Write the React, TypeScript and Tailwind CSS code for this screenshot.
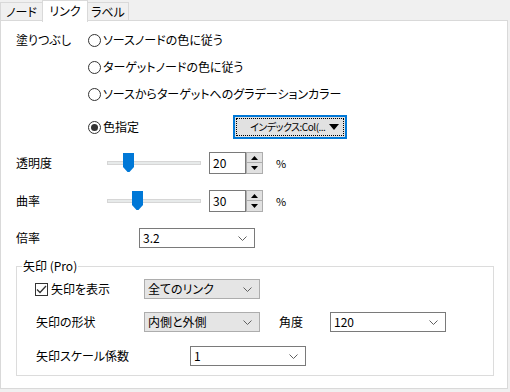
import React from 'react'

const font = "font-['Noto_Sans_CJK_JP',sans-serif] [font-feature-settings:'palt'] text-[12px] leading-[16px] text-black"

function Chevron() {
  return (
    <svg width="9" height="5" viewBox="0 0 9 5" className="shrink-0">
      <path d="M0.5 0.5 L4.5 4.5 L8.5 0.5" fill="none" stroke="#606060" strokeWidth="1" />
    </svg>
  )
}

function Combo({ value, gray = false }: { value: string; gray?: boolean }) {
  return (
    <div
      className={
        gray
          ? 'flex h-[20px] w-[116px] items-center justify-between border border-[#adadad] bg-[#e5e5e5] pl-[3px] pr-[7px]'
          : 'flex h-[20px] w-[116px] items-center justify-between border border-[#7a7a7a] bg-white pl-[3px] pr-[7px]'
      }
    >
      <span>{value}</span>
      <Chevron />
    </div>
  )
}

function Radio({ checked = false, label }: { checked?: boolean; label: string }) {
  return (
    <div className="flex items-center gap-[2px]">
      <div className="flex h-[13px] w-[13px] items-center justify-center rounded-full border border-[#333] bg-white">
        {checked && <div className="h-[7px] w-[7px] rounded-full bg-[#333]" />}
      </div>
      <span>{label}</span>
    </div>
  )
}

function Spin({ value }: { value: string }) {
  return (
    <div className="flex h-[22px]">
      <div className="flex w-[37px] items-center border border-[#7a7a7a] bg-white pl-[3px]">{value}</div>
      <div className="flex w-[17px] flex-col">
        <div className="flex h-[11px] items-center justify-center border border-[#adadad] bg-[#e1e1e1]">
          <svg width="7" height="4" viewBox="0 0 7 4"><path d="M0 4 L3.5 0 L7 4 Z" fill="#000" /></svg>
        </div>
        <div className="flex h-[11px] items-center justify-center border border-t-0 border-[#adadad] bg-[#e1e1e1]">
          <svg width="7" height="4" viewBox="0 0 7 4"><path d="M0 0 L3.5 4 L7 0 Z" fill="#000" /></svg>
        </div>
      </div>
    </div>
  )
}

function SliderRow({ label, value, thumb }: { label: string; value: string; thumb: string }) {
  return (
    <div className="flex h-[22px] items-center">
      <span className="w-[91px]">{label}</span>
      <div className="relative h-[4px] w-[94px] border border-[#d6d6d6] bg-[#e7eaea]">
        <svg width="11" height="19" viewBox="0 0 11 19" className={`absolute top-[-9px] ${thumb}`}>
          <path d="M0 0 H11 V14 L6.5 19 H4.5 L0 14 Z" fill="#0078d7" />
        </svg>
      </div>
      <div className="ml-[8px]">
        <Spin value={value} />
      </div>
      <span className="ml-[13px] text-[11px]">%</span>
    </div>
  )
}

export default function App() {
  return (
    <div className={`h-[392px] w-[510px] bg-[#f0f0f0] ${font}`}>
      {/* tabs */}
      <div className="relative z-10 flex h-[20px] items-start">
        <div className="mt-[2px] flex h-[18px] w-[42px] items-center justify-center border-l border-t border-[#d9d9d9]">ノード</div>
        <div className="flex h-[22px] w-[46px] items-start justify-center border-l border-r border-t border-[#d9d9d9] bg-white pt-[2px]">リンク</div>
        <div className="mt-[2px] flex h-[18px] w-[41px] items-center justify-center border-r border-t border-[#d9d9d9]">ラベル</div>
      </div>

      {/* panel */}
      <div className="flex h-[369px] w-[508px] flex-col border border-[#d9d9d9] bg-white pl-[15px] pt-[8px]">
        <div className="flex h-[22px] items-center">
          <span className="w-[72px]">塗りつぶし</span>
          <Radio label="ソースノードの色に従う" />
        </div>
        <div className="mt-[5px] flex h-[22px] items-center pl-[72px]">
          <Radio label="ターゲットノードの色に従う" />
        </div>
        <div className="mt-[5px] flex h-[22px] items-center pl-[72px]">
          <Radio label="ソースからターゲットへのグラデーションカラー" />
        </div>
        <div className="mt-[9px] flex h-[26px] items-center pl-[72px]">
          <div className="w-[145px]">
            <Radio checked label="色指定" />
          </div>
          <div className="h-[24px] w-[114px] border-2 border-[#0078d7] bg-[#e1e1e1] p-[1px]">
            <div className="flex h-full items-center justify-between whitespace-nowrap border border-dotted border-black pl-[13px] pr-[4px]">
              <span className="text-[10px] tracking-[-0.5px]">インデックス:Col(...</span>
              <svg width="10" height="6" viewBox="0 0 10 6" className="shrink-0"><path d="M0 0 H10 L5 6 Z" fill="#000" /></svg>
            </div>
          </div>
        </div>

        <div className="mt-[12px]">
          <SliderRow label="透明度" value="20" thumb="left-[15px]" />
        </div>
        <div className="mt-[16px]">
          <SliderRow label="曲率" value="30" thumb="left-[24px]" />
        </div>

        <div className="mt-[16px] flex h-[20px] items-center">
          <span className="w-[123px]">倍率</span>
          <Combo value="3.2" />
        </div>

        {/* group box */}
        <div className="relative mt-[18px] flex h-[110px] w-[478px] flex-col border border-[#dcdcdc] pl-[18px] pt-[12px]">
          <span className="absolute left-[5px] top-[-9px] bg-white px-[1px]">矢印 (Pro)</span>
          <div className="flex h-[20px] items-center">
            <div className="flex w-[109px] items-center gap-[3px]">
              <div className="flex h-[13px] w-[13px] items-center justify-center border border-[#333] bg-white">
                <svg width="11" height="9" viewBox="0 0 11 9"><path d="M1 4.5 L4 7.5 L10 1" fill="none" stroke="#333" strokeWidth="1.3" /></svg>
              </div>
              <span>矢印を表示</span>
            </div>
            <Combo value="全てのリンク" gray />
          </div>
          <div className="mt-[13px] flex h-[20px] items-center">
            <span className="w-[109px] pl-[1px]">矢印の形状</span>
            <Combo value="内側と外側" gray />
            <span className="ml-[19px] w-[51px]">角度</span>
            <Combo value="120" />
          </div>
          <div className="mt-[14px] flex h-[20px] items-center">
            <span className="w-[155px] pl-[1px]">矢印スケール係数</span>
            <Combo value="1" />
          </div>
        </div>
      </div>
    </div>
  )
}
